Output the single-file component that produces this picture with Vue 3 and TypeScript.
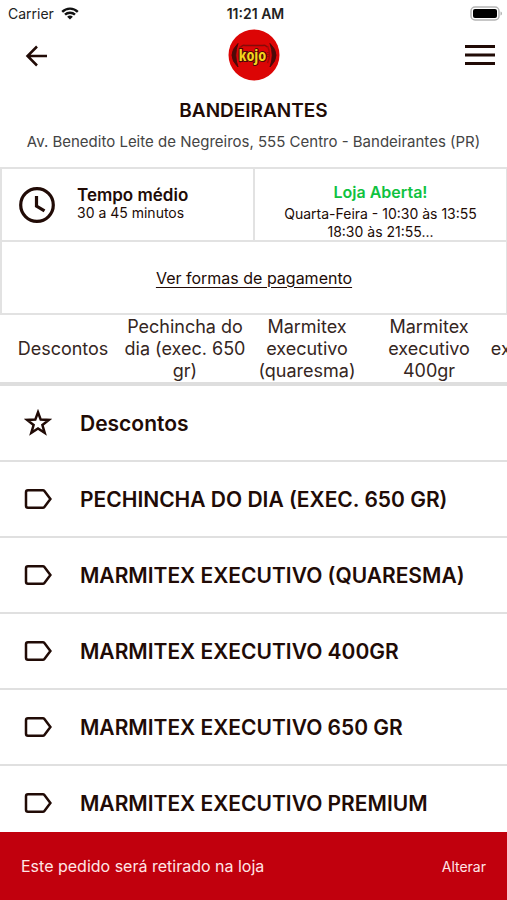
<script setup lang="ts">
import { ref } from 'vue'

interface Category {
  id: number
  label: string
  title: string
  icon: 'star' | 'tag'
}

const categories: Category[] = [
  { id: 1, label: 'Descontos', title: 'Descontos', icon: 'star' },
  { id: 2, label: 'Pechincha do dia (exec. 650 gr)', title: 'PECHINCHA DO DIA (EXEC. 650 GR)', icon: 'tag' },
  { id: 3, label: 'Marmitex executivo (quaresma)', title: 'MARMITEX EXECUTIVO (QUARESMA)', icon: 'tag' },
  { id: 4, label: 'Marmitex executivo 400gr', title: 'MARMITEX EXECUTIVO 400GR', icon: 'tag' },
  { id: 5, label: 'Marmitex executivo 650 gr', title: 'MARMITEX EXECUTIVO 650 GR', icon: 'tag' },
  { id: 6, label: 'Marmitex executivo premium', title: 'MARMITEX EXECUTIVO PREMIUM', icon: 'tag' },
]

const rows = ref<HTMLElement[]>([])

function showCategory(index: number) {
  rows.value[index]?.scrollIntoView({ behavior: 'smooth' })
}
</script>

<template>
  <div class="screen">
    <div class="status">
      <span class="carrier">
        Carrier
        <svg class="wifi" viewBox="0 0 18 13" aria-hidden="true">
          <path d="M1.2 4.8a11.2 11.2 0 0 1 15.6 0" />
          <path d="M4 7.7a7.2 7.2 0 0 1 10 0" />
          <path class="dot" d="M9 12.6 6.1 9.8a4.2 4.2 0 0 1 5.8 0z" />
        </svg>
      </span>
      <span class="time">11:21 AM</span>
      <svg class="battery" viewBox="0 0 33 15" aria-hidden="true">
        <rect x="1" y="1" width="28" height="13" rx="4" fill="#fff" stroke="#b4b4b4" stroke-width="1.5" />
        <rect x="3" y="3" width="24" height="9" rx="2" fill="#000" />
        <path d="M30.5 5.5c2 .6 2 3.4 0 4z" fill="#b4b4b4" />
      </svg>
    </div>

    <header class="top">
      <button class="icon-button" type="button" aria-label="Voltar">
        <svg class="back" viewBox="0 0 24 24"><path d="M23 13H4M13 3.5 3.5 13l9.5 9.5" /></svg>
      </button>
      <svg class="logo" viewBox="0 0 52 52" role="img" aria-label="Kojo">
        <circle cx="26" cy="26" r="25.5" fill="#dc0505" />
        <path d="M10 14.500Q-2 26 10 38Q5.500 26 10 14.500zM42 14.500Q54 26 42 38Q46.500 26 42 14.500z" fill="#4b0908" stroke="#4b0908" />
        <path d="M12.500 17Q8.500 26 12.500 34M39.500 17Q43.500 26 39.500 34" fill="none" stroke="#a10a08" stroke-width="1.5" />
        <path d="M13 18q2-2.500 4-1.500h18q2-1 4 1.500" fill="none" stroke="#850b08" stroke-width="1.5" />
        <path d="M40 23v6" stroke="#a10a08" stroke-width="2" stroke-dasharray="1 1" />
        <text x="24.500" y="31.500" text-anchor="middle" class="logo-text">kojo</text>
      </svg>
      <button class="icon-button end" type="button" aria-label="Menu">
        <svg class="menu" viewBox="0 0 30 22"><path d="M0 2.500h30M0 11h30M0 19.500h30" /></svg>
      </button>
    </header>

    <h1>BANDEIRANTES</h1>
    <p class="address">Av. Benedito Leite de Negreiros, 555 Centro - Bandeirantes (PR)</p>

    <section class="info">
      <div class="wait">
        <svg class="clock" viewBox="0 0 36 36" aria-hidden="true">
          <circle cx="18" cy="18" r="16.3" /><path d="M17.500 9v10l8 4.800" />
        </svg>
        <div class="wait-text">
          <strong>Tempo médio</strong>
          <span>30 a 45 minutos</span>
        </div>
      </div>
      <div class="hours">
        <strong>Loja Aberta!</strong>
        <span>Quarta-Feira - 10:30 às 13:55</span>
        <span>18:30 às 21:55...</span>
      </div>
      <div class="payment"><a href="#pagamento">Ver formas de pagamento</a></div>
    </section>

    <nav class="tabs" aria-label="Categorias">
      <button v-for="(c, i) in categories" :key="c.id" type="button" @click="showCategory(i)">{{ c.label }}</button>
    </nav>

    <main class="list">
      <div v-for="c in categories" :key="c.id" ref="rows" class="row">
        <svg v-if="c.icon === 'star'" viewBox="0 0 28 28" aria-hidden="true">
          <path d="m14 3.300 2.700 7.300 8.200.3-6.500 5.100 2.300 7.900-6.700-4.500-6.700 4.500 2.300-7.900-6.500-5.100 8.200-.3z" />
        </svg>
        <svg v-else viewBox="0 0 28 28" aria-hidden="true">
          <path d="M4 5.200h14.800q1 0 1.600.8L26.400 14l-6 8q-.6.800-1.600.8H4q-2 0-2-2V7.200q0-2 2-2z" />
        </svg>
        <h2>{{ c.title }}</h2>
      </div>
    </main>

    <footer class="pickup">
      <span>Este pedido será retirado na loja</span>
      <button type="button">Alterar</button>
    </footer>
  </div>
</template>

<style>
body {
  margin: 0;
  background: #fff;
}
</style>

<style scoped>
.screen {
  display: flex;
  flex-direction: column;
  height: 100vh;
  overflow: hidden;
  color: #210b06;
  font-family: Inter, "Liberation Sans", sans-serif;
}
button {
  padding: 0;
  border: 0;
  background: none;
  color: inherit;
  font: inherit;
  cursor: pointer;
}
svg {
  display: block;
  flex: none;
}
.status {
  display: grid;
  grid-template-columns: 1fr auto 1fr;
  align-items: center;
  height: 26px;
  padding: 0 4px 0 8px;
  color: #222;
  font-size: 14px;
}
.carrier {
  display: flex;
  align-items: center;
  gap: 7px;
}
.wifi {
  width: 18px;
  height: 13px;
  fill: none;
  stroke: #111;
  stroke-width: 2.4;
}
.wifi .dot {
  fill: #111;
  stroke: none;
}
.time {
  font-weight: 600;
}
.battery {
  width: 33px;
  height: 15px;
  justify-self: end;
}
.top {
  display: grid;
  grid-template-columns: 1fr auto 1fr;
  align-items: center;
  height: 58px;
  padding: 0 12px;
}
.icon-button {
  justify-self: start;
  padding: 0 12px;
}
.icon-button.end {
  justify-self: end;
  padding: 0;
}
.back {
  width: 24px;
  height: 24px;
  fill: none;
  stroke: #210b06;
  stroke-width: 2.5;
}
.menu {
  width: 30px;
  height: 22px;
  stroke: #210b06;
  stroke-width: 3;
}
.logo {
  width: 52px;
  height: 52px;
}
.logo-text {
  fill: #f5d51c;
  stroke: #4b0908;
  stroke-width: 2px;
  paint-order: stroke;
  font: 700 16px "Liberation Sans Narrow", "Open Sans Condensed", "DejaVu Sans Condensed", sans-serif;
}
h1 {
  margin: 13px 0 0;
  font-size: 19px;
  font-weight: 600;
  line-height: 28px;
  text-align: center;
}
.address {
  margin: 5px 0 14px;
  color: #444;
  font-size: 15px;
  line-height: 23px;
  text-align: center;
}
.info {
  display: grid;
  grid-template-columns: 1fr 1fr;
  gap: 2px;
  padding: 2px 1px 2px 2px;
  background: #e2e2e2;
}
.info > div {
  height: 71px;
  background: #fff;
}
.wait {
  display: flex;
  align-items: center;
  gap: 22px;
  padding-left: 17px;
}
.wait-text {
  padding-bottom: 2px;
}
.clock {
  width: 36px;
  height: 36px;
  fill: none;
  stroke: #210b06;
  stroke-width: 3.2;
}
.info strong,
.info span {
  display: block;
  font-size: 14px;
  line-height: 18px;
}
.info strong {
  font-weight: 600;
}
.info .wait strong {
  font-size: 17px;
}
.hours {
  padding-top: 14px;
  box-sizing: border-box;
  text-align: center;
}
.info .hours strong {
  margin-bottom: 4px;
  color: #0fc23f;
  font-size: 16px;
}
.info .payment {
  grid-column: 1 / -1;
  display: flex;
  align-items: center;
  justify-content: center;
}
.payment a {
  color: inherit;
  font-size: 16px;
  text-underline-offset: 3px;
}
.tabs {
  display: flex;
  flex: none;
  padding: 1px 2px 0;
  border-bottom: 4px solid #dedede;
  overflow-x: auto;
  scrollbar-width: none;
}
.tabs button {
  flex: none;
  width: 122px;
  font-size: 18px;
  line-height: 22px;
  color: #352622;
}
.list {
  flex: 1;
  min-height: 0;
  overflow-y: auto;
  scrollbar-width: none;
}
.row {
  display: flex;
  align-items: center;
  gap: 28px;
  height: 74px;
  padding: 0 24px;
  border-bottom: 2px solid #e0e0e0;
}
.row svg {
  width: 28px;
  height: 28px;
  fill: none;
  stroke: #210b06;
  stroke-width: 2.5;
}
h2 {
  margin: 0;
  font-size: 21px;
  font-weight: 600;
  white-space: nowrap;
}
.pickup {
  display: flex;
  flex: none;
  align-items: center;
  justify-content: space-between;
  height: 68px;
  padding: 0 21px;
  background: #c1000d;
  color: #ffe5e6;
  font-size: 16px;
}
.pickup button {
  font-size: 14px;
}
</style>
